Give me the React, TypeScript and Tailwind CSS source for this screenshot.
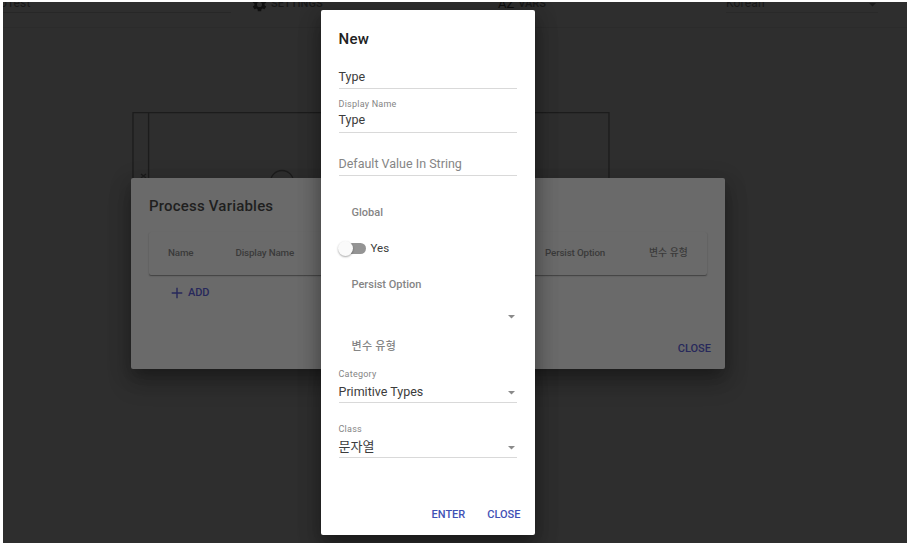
import type { ReactNode } from 'react';

function Caret({ className = '' }: { className?: string }) {
  return (
    <svg viewBox="0 0 8 4" className={`h-[3.5px] w-[7px] shrink-0 ${className}`}>
      <path d="M0 0h8L4 4z" fill="currentColor" />
    </svg>
  );
}

function Field({ label, value, height, select, placeholder, textStyle = 'text-[12.5px] leading-[19px]' }: { label?: string; value: string; height: string; select?: boolean; placeholder?: boolean; textStyle?: string }) {
  return (
    <div className={`flex ${height} flex-col justify-end border-b border-[#d9d9d9]`}>
      {label && <div className="h-[14px] text-[9px] leading-[14px] tracking-[0.23px] text-[#858585]">{label}</div>}
      <div className={`flex h-[21px] items-start justify-between ${textStyle} ${placeholder ? 'text-[#858585]' : 'text-[#3c3c3c]'}`}>
        <span>{value}</span>
        {select && <Caret className="mt-[10px] mr-[2px] text-[#8a8a8a]" />}
      </div>
    </div>
  );
}

function Subheader({ children, height, spacing = '' }: { children: ReactNode; height: string; spacing?: string }) {
  return <div className={`flex ${height} ${spacing} items-center pt-[1px] pl-[13px] text-[11px] font-medium text-[#858585]`}>{children}</div>;
}

function Toolbar() {
  return (
    <div className="flex h-[26px] shrink-0 border-b border-[#2b2b2b] text-[12px] leading-[12px] text-[#181818]">
      <div className="-mt-[5px] -ml-[3px] h-[16px] w-[231px] border-b border-[#272727] tracking-[0.1px]">oTest</div>
      <div className="-mt-[4px] ml-[20px] flex w-[247px] items-start">
        <svg viewBox="0 0 24 24" className="-mt-[2px] h-[17px] w-[17px] text-[#101010]" fill="currentColor">
          <path d="M19.14 12.94c.04-.3.06-.61.06-.94s-.02-.64-.07-.94l2.03-1.58a.49.49 0 0 0 .12-.61l-1.92-3.32a.49.49 0 0 0-.59-.22l-2.39.96a7 7 0 0 0-1.62-.94l-.36-2.54A.48.48 0 0 0 13.92 2h-3.84a.48.48 0 0 0-.47.41l-.36 2.54c-.59.24-1.13.57-1.62.94l-2.39-.96a.48.48 0 0 0-.59.22L2.74 8.87a.48.48 0 0 0 .12.61l2.03 1.58a7 7 0 0 0 0 1.88l-2.03 1.58a.49.49 0 0 0-.12.61l1.92 3.32c.12.22.37.29.59.22l2.39-.96c.5.38 1.03.7 1.62.94l.36 2.54c.05.24.24.41.47.41h3.84c.24 0 .44-.17.47-.41l.36-2.54a7 7 0 0 0 1.62-.94l2.39.96c.22.08.47 0 .59-.22l1.92-3.32a.48.48 0 0 0-.12-.61zM12 15.6a3.6 3.6 0 1 1 0-7.2 3.6 3.6 0 0 1 0 7.2z" />
        </svg>
        <span className="ml-[3px] text-[11px] font-medium">SETTINGS</span>
      </div>
      <div className="-mt-[4px] flex w-[228px] items-start">
        <span className="mr-[4px] text-[13px] leading-[12px] text-[#0e0e0e]">AZ</span>
        <span className="text-[11px] leading-[12px] font-medium">VARS</span>
      </div>
      <div className="-mt-[5px] flex h-[16px] w-[152px] items-start justify-between border-b border-[#292929] pr-[2px] tracking-[0.2px]">
        Korean
        <Caret className="mt-[6px] text-[#1b1b1b]" />
      </div>
    </div>
  );
}

function Canvas() {
  return (
    <svg className="block h-[515px] w-[904px] shrink-0" viewBox="3 28 904 515" fill="none" stroke="#1c1c1c" strokeWidth="1.3">
      <path d="M133 240V112.7H609V240M148.6 113V240" />
      <circle cx="282" cy="182" r="11.5" />
      <path d="M141 178l5-4m-5 0l5 4" />
    </svg>
  );
}

function VariablesDialog() {
  return (
    <div className="absolute top-[176px] left-[128px] flex h-[190.5px] w-[594px] flex-col rounded-[2px] bg-[#6a6a6a] px-[18px] pt-[19px] pb-[12px] shadow-[0_9px_12px_-5px_rgba(0,0,0,.2),0_14px_22px_2px_rgba(0,0,0,.18),0_4px_20px_4px_rgba(0,0,0,.12)]">
      <h2 className="h-[35px] text-[15px] leading-[19px] font-medium tracking-[0.2px] text-[#1f1f1f]">Process Variables</h2>
      <div className="flex h-[43px] shrink-0 items-center rounded-[2px] pl-[19px] text-[9.8px] font-medium tracking-[-0.15px] text-[#3a3a3a] shadow-[0_1px_1px_rgba(0,0,0,.3),0_1px_2px_rgba(0,0,0,.12)]">
        <span className="w-[67.5px]">Name</span>
        <span className="w-[309.5px]">Display Name</span>
        <span className="w-[104px]">Persist Option</span>
        <span className="tracking-[0.1px]">변수 유형</span>
      </div>
      <div className="mt-[8px] flex h-[19px] items-center pl-[22px] text-[11px] font-medium tracking-[-0.1px] text-[#27285b]">
        <svg viewBox="0 0 12 12" className="mr-[5px] h-[12px] w-[12px]" fill="none" stroke="currentColor" strokeWidth="1.4"><path d="M6 .7v10.6M.7 6h10.6" /></svg>
        <span className="mt-px">ADD</span>
      </div>
      <div className="mt-auto -mr-[4px] text-right text-[11px] leading-[16px] font-medium text-[#27285b]">CLOSE</div>
    </div>
  );
}

function NewDialog() {
  return (
    <div className="absolute top-[8px] left-[317.5px] flex h-[525px] w-[214px] flex-col rounded-[2px] bg-white px-[18px] pt-[19.5px] shadow-[0_9px_12px_-5px_rgba(0,0,0,.2),0_14px_22px_2px_rgba(0,0,0,.18),0_4px_20px_4px_rgba(0,0,0,.16)]">
      <h2 className="h-[19.5px] text-[15px] leading-[19px] font-medium tracking-[0.3px] text-[#222]">New</h2>
      <Field value="Type" height="h-[40px]" />
      <Field label="Display Name" value="Type" height="h-[44px]" textStyle="text-[12.5px] leading-[17px]" />
      <Field value="Default Value In String" height="h-[43px]" placeholder />
      <div className="h-[16px]" />
      <Subheader height="h-[41px]">Global</Subheader>
      <div className="flex h-[31px] items-center">
        <span className="flex h-[11px] w-[27px] items-center rounded-full bg-[#949494]">
          <span className="-ml-px h-[15px] w-[15px] rounded-full bg-[#fafafa] shadow-[0_1px_2px_rgba(0,0,0,.35)]" />
        </span>
        <span className="ml-[5px] text-[11.5px] text-[#3c3c3c]">Yes</span>
      </div>
      <Subheader height="h-[41px]">Persist Option</Subheader>
      <div className="flex h-[24px] items-center justify-end pr-[2px] text-[#8a8a8a]"><Caret /></div>
      <Subheader height="h-[35px]" spacing="tracking-[0.3px]">변수 유형</Subheader>
      <Field label="Category" value="Primitive Types" height="h-[39px]" select textStyle="text-[12.5px] leading-[21px]" />
      <Field label="Class" value="문자열" height="h-[55px]" select textStyle="text-[13px] leading-[22px]" />
      <div className="mt-auto -mr-[4px] mb-[12px] flex justify-end gap-[22px] text-[11px] leading-[16px] font-medium text-[#3f51b5]">
        <span>ENTER</span>
        <span>CLOSE</span>
      </div>
    </div>
  );
}

export default function App() {
  return (
    <div className="h-[546px] w-[909px] bg-white pt-[2px] pl-[3px] font-[Roboto,'Noto_Sans_CJK_KR',sans-serif]">
      <div className="relative flex h-[541px] w-[904px] flex-col overflow-hidden bg-[#2e2e2e]">
        <Toolbar />
        <Canvas />
        <VariablesDialog />
        <NewDialog />
      </div>
    </div>
  );
}
